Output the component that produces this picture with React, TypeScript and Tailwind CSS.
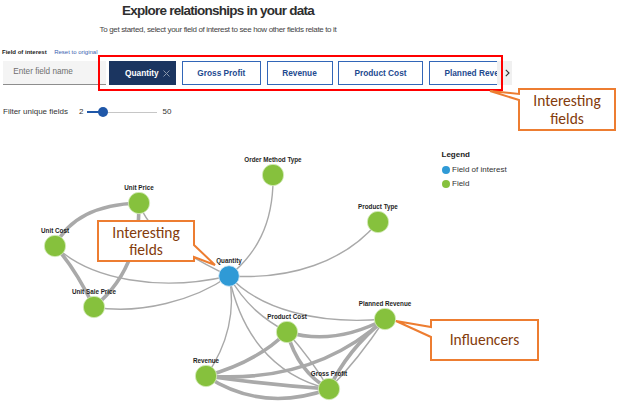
import React from "react";

type N = { label: string; x: number; y: number; focus?: boolean };

const nodes: N[] = [
  { label: "Order Method Type", x: 273, y: 175 },
  { label: "Unit Price", x: 139, y: 203 },
  { label: "Unit Cost", x: 55, y: 246 },
  { label: "Product Type", x: 378, y: 222 },
  { label: "Unit Sale Price", x: 94, y: 307 },
  { label: "Planned Revenue", x: 385, y: 319 },
  { label: "Product Cost", x: 287, y: 332 },
  { label: "Revenue", x: 206, y: 376 },
  { label: "Gross Profit", x: 329, y: 389 },
  { label: "Quantity", x: 229, y: 276, focus: true },
];

const thin: string[] = [
  "M229,276 C255,255 274,225 273,175",
  "M229,276 C290,280 345,262 378,222",
  "M139,203 C148,230 175,250 229,276",
  "M55,246 C90,280 160,292 229,276",
  "M94,307 C140,315 195,300 229,276",
  "M229,276 C236,310 228,345 206,376",
  "M229,276 C245,305 265,320 287,332",
  "M229,276 C260,310 320,325 385,319",
  "M229,276 C240,330 270,375 329,389",
  "M329,389 Q358,360 385,319",
  "M287,332 Q312,360 329,389",
];

const thick: string[] = [
  "M55,246 Q75,205 139,203",
  "M55,246 Q75,268 94,307",
  "M139,203 Q140,269 94,307",
  "M287,332 Q334,346 385,319",
  "M287,332 Q257,362 206,376",
  "M287,332 Q298,372 329,389",
  "M206,376 Q314,384 385,319",
  "M206,376 Q262,413 329,389",
  "M206,376 Q270,385 329,389",
  "M329,389 Q347,350 385,319",
];

function Chip({ label, w }: { label: string; w: string }) {
  return (
    <div
      className={`${w} h-full shrink-0 flex items-center justify-center border-[1.5px] border-[#3266b8] text-[#1e4a8f] font-bold text-[8.3px] whitespace-nowrap`}
    >
      {label}
    </div>
  );
}

export default function App() {
  return (
    <div className="relative w-[622px] h-[409px] overflow-hidden bg-white font-['Liberation_Sans',Arial,sans-serif] text-[#222]">
      {/* Top section */}
      <div className="h-[130px]">
        <div className="w-[436px] pt-[3px] text-center">
          <h1 className="text-[13.5px] leading-[16px] font-bold tracking-[-0.75px] text-[#2e2e2e]">
            Explore relationships in your data
          </h1>
          <p className="mt-[5.5px] text-[8px] leading-[10px] tracking-[-0.35px] text-[#444]">
            To get started, select your field of interest to see how other fields relate to it
          </p>
        </div>

        <div className="mt-[13.5px] ml-[2px] flex items-center h-[8px] text-[6px] leading-[8px]">
          <span className="font-bold text-[#222]">Field of interest</span>
          <span className="ml-[7.5px] text-[#3a62b0]">Reset to original</span>
        </div>

        <div className="mt-[5px] flex h-[24px]">
          <div className="ml-[3px] w-[103px] h-full bg-[#f4f4f4] border-b border-[#8d8d8d] flex items-center pl-[10.3px] text-[8.2px] text-[#6f6f6f]">
            Enter field name
          </div>
          <div className="ml-[3px] w-[388px] h-full overflow-hidden flex gap-[5.5px]">
            <div className="w-[67px] h-full shrink-0 flex items-center pl-[16px] bg-[#1b3560] text-white font-bold text-[8.3px]">
              Quantity
              <svg width="7" height="7" viewBox="0 0 7 7" className="ml-[4.5px]">
                <path d="M0.5,0.5 L6.5,6.5 M6.5,0.5 L0.5,6.5" stroke="#8a97ab" strokeWidth="1" />
              </svg>
            </div>
            <Chip label="Gross Profit" w="w-[79.5px]" />
            <Chip label="Revenue" w="w-[66px]" />
            <Chip label="Product Cost" w="w-[85px]" />
            <Chip label="Planned Revenue" w="w-[101px]" />
          </div>
          <div className="w-[15px] h-full bg-[#f0f0f0] flex items-center pl-[8px]">
            <svg width="5" height="8" viewBox="0 0 5 8">
              <path d="M0.8,0.8 L4,4 L0.8,7.2" fill="none" stroke="#333" strokeWidth="1.1" />
            </svg>
          </div>
        </div>

        <div className="mt-[21px] flex items-center h-[12px] text-[8px] text-[#333]">
          <span className="ml-[3px] w-[66px] whitespace-nowrap">Filter unique fields</span>
          <span className="ml-[10px]">2</span>
          <div className="relative ml-[4px] w-[70px] h-[10px] flex items-center">
            <div className="h-[2px] w-[16px] bg-[#1f57a8]" />
            <div className="h-px flex-1 bg-[#c6c6c6]" />
            <div className="absolute left-[10.5px] top-0 w-[10px] h-[10px] rounded-full bg-[#1f57a8]" />
          </div>
          <span className="ml-[5px]">50</span>
        </div>
      </div>

      {/* Graph canvas */}
      <div className="relative h-[279px]">
        <svg width="622" height="279" viewBox="0 130 622 279" className="block">
          <g fill="none" stroke="#a9a9a9" strokeLinecap="round">
            {thin.map((d, i) => (
              <path key={"t" + i} d={d} strokeWidth="1.4" />
            ))}
            {thick.map((d, i) => (
              <path key={"k" + i} d={d} strokeWidth="3.6" />
            ))}
          </g>
          {nodes.map((n) => (
            <g key={n.label}>
              <circle
                cx={n.x}
                cy={n.y}
                r={n.focus ? 10.3 : 10.7}
                fill={n.focus ? "#2f9ad6" : "#86c13d"}
                stroke={n.focus ? "#cfe6f5" : "#dcefc6"}
                strokeWidth="0.8"
              />
              <text
                x={n.x}
                y={n.y - 12.6}
                textAnchor="middle"
                fontFamily="'Liberation Sans', Arial, sans-serif"
                fontWeight="bold"
                fontSize="6.3"
                fill="#1e1e1e"
              >
                {n.label}
              </text>
            </g>
          ))}
        </svg>

        {/* Legend */}
        <div className="absolute left-[441.5px] top-[20px] flex flex-col gap-[4.5px] text-[8px] leading-[10px]">
          <div className="font-bold text-[#222]">Legend</div>
          <div className="flex items-center gap-[2.5px] text-[#333]">
            <span className="w-[8px] h-[8px] rounded-full bg-[#2f9ad6]" />
            Field of interest
          </div>
          <div className="flex items-center gap-[2.5px] text-[#333]">
            <span className="w-[8px] h-[8px] rounded-full bg-[#86c13d]" />
            Field
          </div>
        </div>
      </div>

      {/* Red highlight around interesting fields */}
      <div className="absolute left-[97.5px] top-[55px] w-[405px] h-[36px] border-2 border-[#ff0000]" />

      {/* Callout 1 */}
      <div className="absolute left-[488px] top-[87px] w-[129px] h-[45px]">
        <svg width="129" height="45" viewBox="488 87 129 45" className="absolute inset-0">
          <path d="M519,89 H615 V130 H519 V100 L490,91 L519,94 Z" fill="#fff" stroke="#ed7d31" strokeWidth="2" />
        </svg>
        <div className="absolute left-[31px] top-[2px] w-[96px] h-[41px] flex flex-col items-center justify-center text-[15.5px] leading-[17.5px] text-[#843c0c] font-['Carlito','Lato',sans-serif]">
          <span>Interesting</span>
          <span>fields</span>
        </div>
      </div>

      {/* Callout 2 */}
      <div className="absolute left-[96px] top-[219px] w-[121px] h-[48px]">
        <svg width="121" height="48" viewBox="96 219 121 48" className="absolute inset-0">
          <path d="M98,221 H194 V245 L215,265 L194,257 V261 H98 Z" fill="#fff" stroke="#ed7d31" strokeWidth="2" />
        </svg>
        <div className="absolute left-[2px] top-[2px] w-[96px] h-[40px] flex flex-col items-center justify-center text-[15.5px] leading-[17.5px] text-[#843c0c] font-['Carlito','Lato',sans-serif]">
          <span>Interesting</span>
          <span>fields</span>
        </div>
      </div>

      {/* Callout 3 */}
      <div className="absolute left-[394px] top-[318px] w-[146px] h-[44px]">
        <svg width="146" height="44" viewBox="394 318 146 44" className="absolute inset-0">
          <path d="M431,320 H538 V360 H431 V337 L396,321 L431,327 Z" fill="#fff" stroke="#ed7d31" strokeWidth="2" />
        </svg>
        <div className="absolute left-[37px] top-[2px] w-[107px] h-[40px] flex items-center justify-center text-[15.5px] leading-[17.5px] text-[#843c0c] font-['Carlito','Lato',sans-serif]">
          Influencers
        </div>
      </div>
    </div>
  );
}
